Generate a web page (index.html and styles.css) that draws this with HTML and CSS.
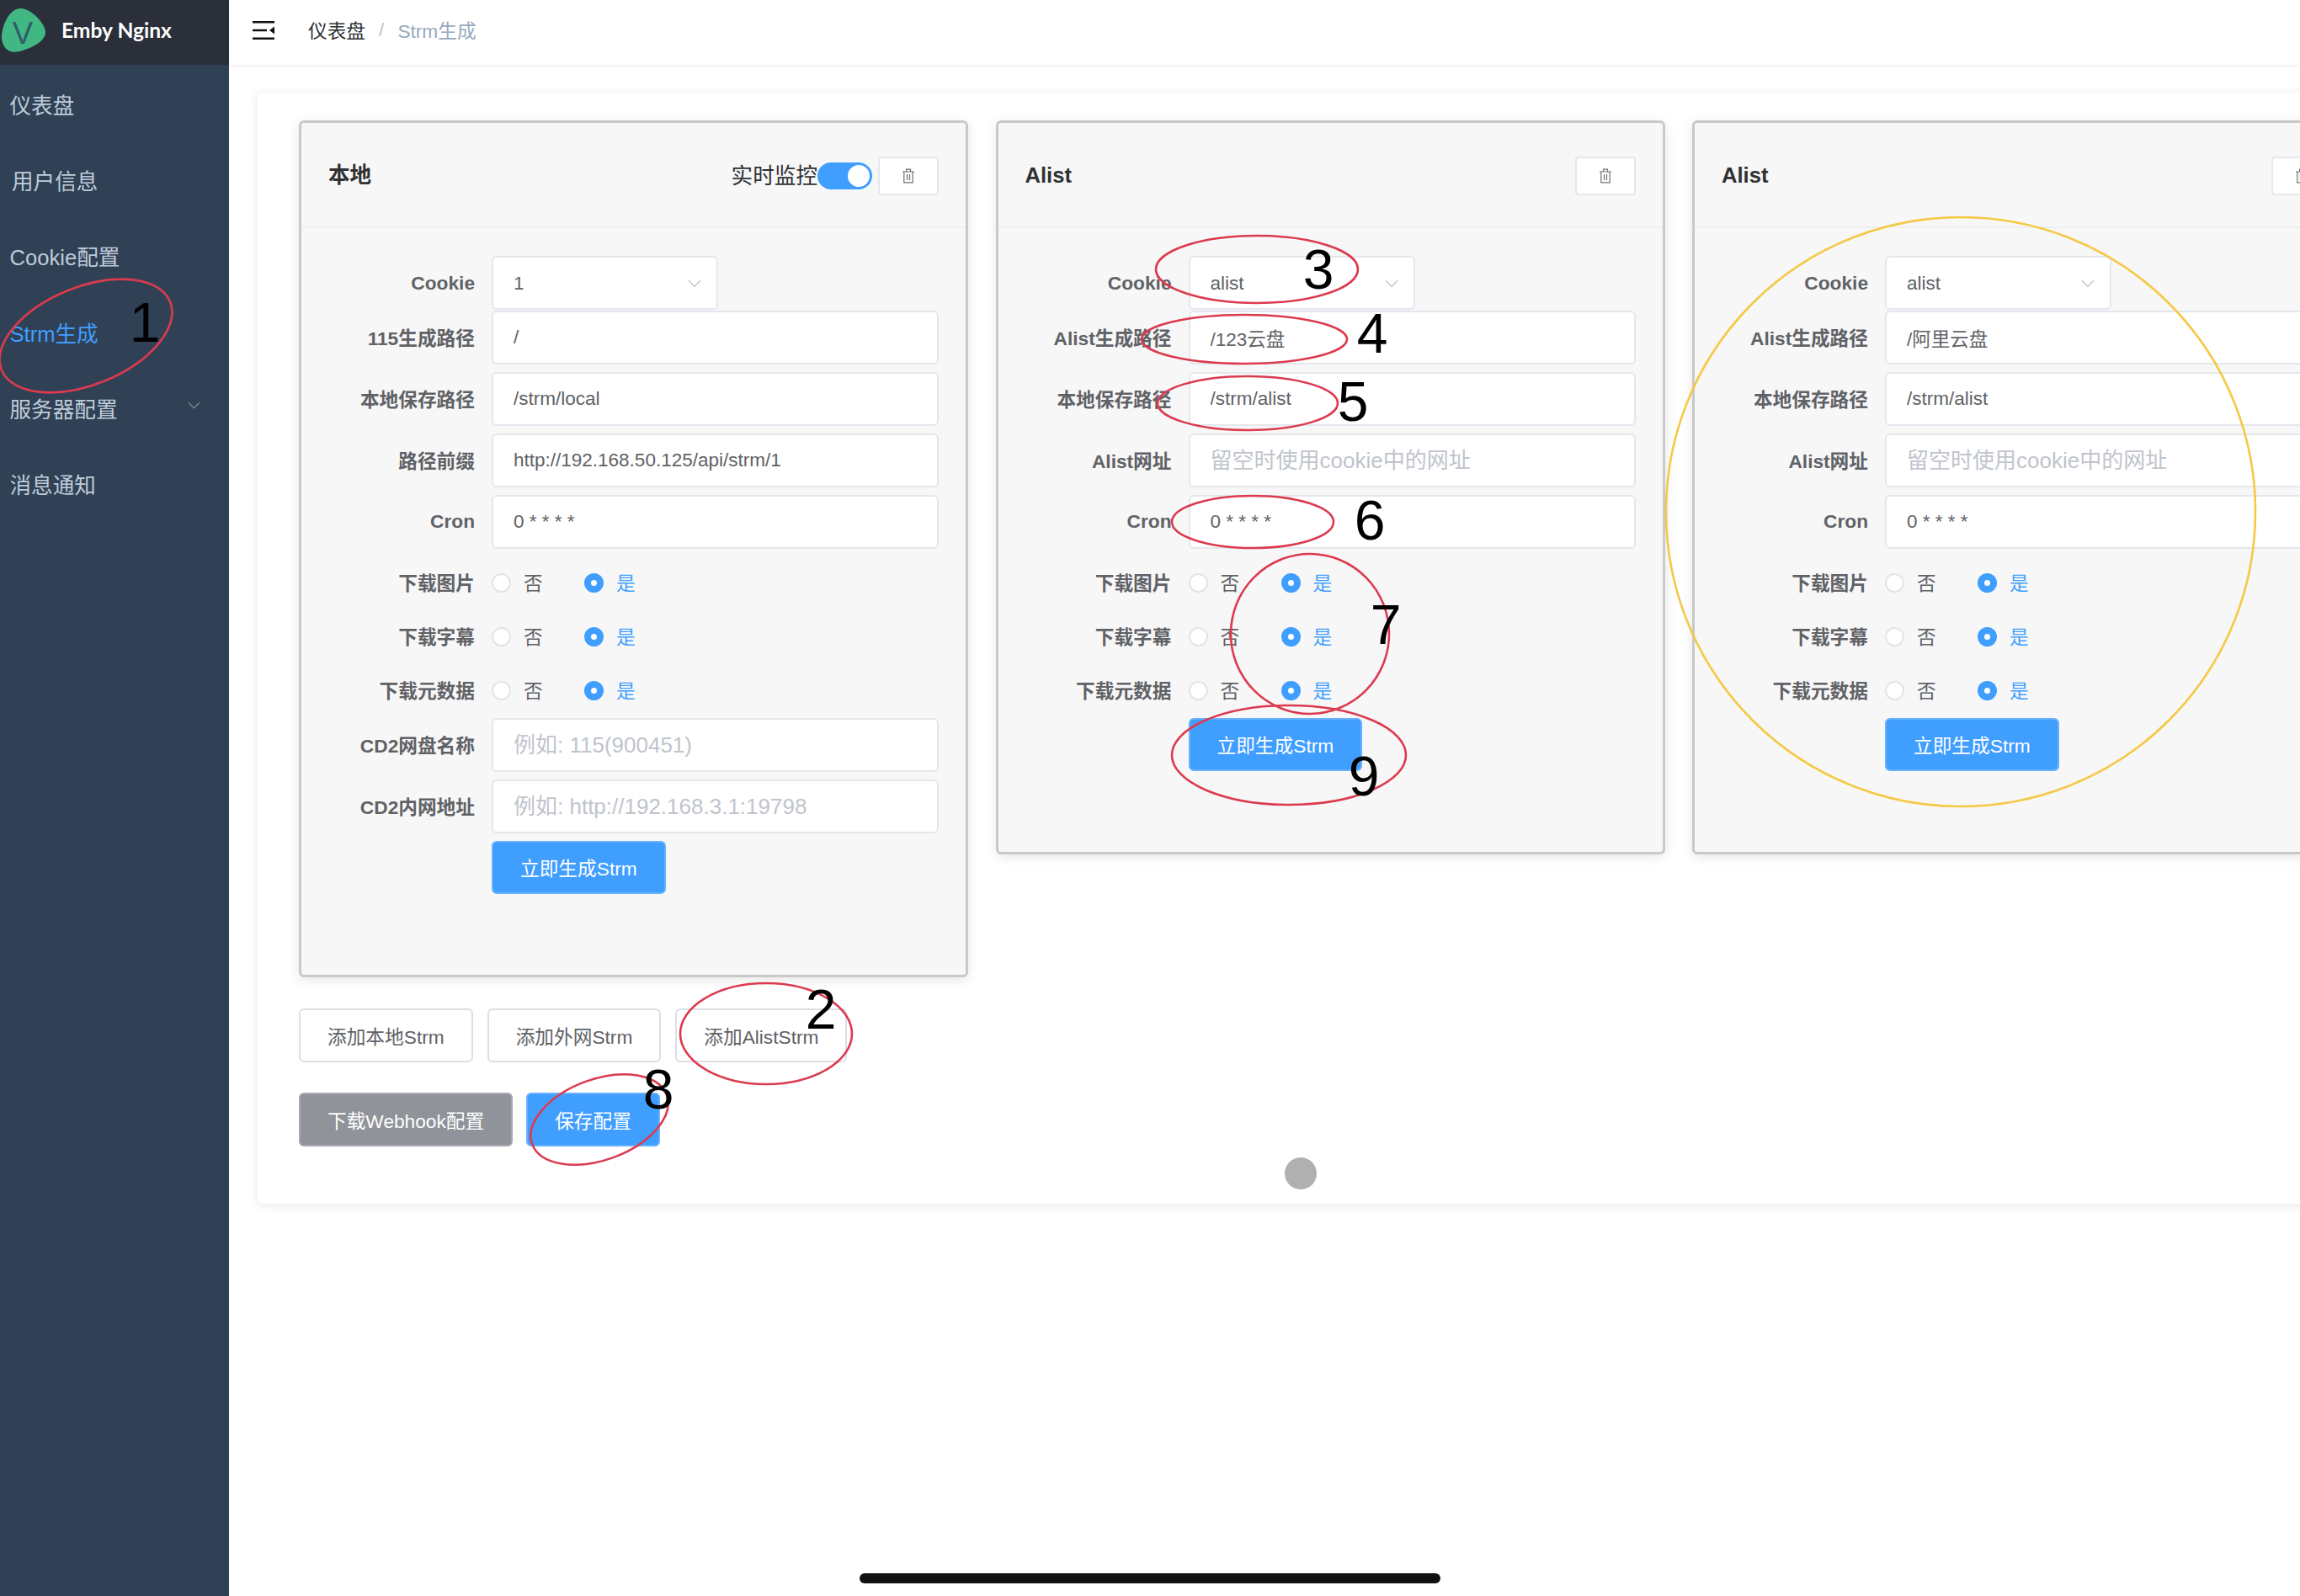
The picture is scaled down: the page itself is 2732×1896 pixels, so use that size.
FILE: index.html
```html
<!DOCTYPE html>
<html>
<head>
  <title>Strm生成</title>
  <link rel="stylesheet" href="styles.css">
</head>
<body>
  <div class="app">
    <aside class="sidebar">
      <div class="brand">
        <svg class="brand-logo" viewBox="0 0 56 56">
          <path d="M25 1 C38 2 54 19 55 30 C55 42 37 50 23 54 C10 57 2 50 1 37 C1 22 11 0 25 1Z" fill="#41b883"/>
          <text x="27" y="45" text-anchor="middle" class="brand-v">V</text>
        </svg>
        <span class="brand-name">Emby Nginx</span>
      </div>
      <nav class="menu">
        <a class="menu-item">仪表盘</a>
        <a class="menu-item menu-item-shift">用户信息</a>
        <a class="menu-item">Cookie配置</a>
        <a class="menu-item active">Strm生成</a>
        <a class="menu-item">服务器配置
          <svg class="menu-arrow" viewBox="0 0 16 10"><path d="M1 1 L8 8 L15 1" fill="none" stroke="#7f8c9c" stroke-width="1.3"/></svg>
        </a>
        <a class="menu-item">消息通知</a>
      </nav>
    </aside>

    <div class="main">
      <header class="topbar">
        <svg class="fold" viewBox="0 0 26 22">
          <path d="M0 1.2 H26 M0 11 H17 M0 20.8 H26" stroke="#111" stroke-width="2.4"/>
          <path d="M26 6.5 V15.5 L20 11Z" fill="#111"/>
        </svg>
        <span class="crumb">仪表盘</span>
        <span class="crumb-sep">/</span>
        <span class="crumb-current">Strm生成</span>
      </header>

      <section class="panel">
        <div class="cards">

          <div class="card card-tall">
            <div class="card-head">
              <span class="card-title">本地</span>
              <div class="card-tools">
                <span class="switch-label">实时监控</span>
                <span class="switch"><i></i></span>
                <button class="del">
                  <svg viewBox="0 0 16 18"><path d="M1 4 H15 M5.5 4 V1.2 H10.5 V4 M2.8 4 V16.8 H13.2 V4 M6.5 7 V14 M9.5 7 V14" fill="none" stroke="#6b6e74" stroke-width="1.2"/></svg>
                </button>
              </div>
            </div>
            <form class="card-body">
              <div class="row row-select"><label>Cookie</label>
                <div class="select"><span>1</span><svg viewBox="0 0 16 10"><path d="M1 1 L8 8.5 L15 1" fill="none" stroke="#c0c4cc" stroke-width="1.3"/></svg></div>
              </div>
              <div class="row"><label>115生成路径</label><input value="/"></div>
              <div class="row"><label>本地保存路径</label><input value="/strm/local"></div>
              <div class="row"><label>路径前缀</label><input value="http://192.168.50.125/api/strm/1"></div>
              <div class="row"><label>Cron</label><input value="0 * * * *"></div>
              <div class="row-radio"><label>下载图片</label><span class="radio"></span><span class="radio-text">否</span><span class="radio on"></span><span class="radio-text on">是</span></div>
              <div class="row-radio"><label>下载字幕</label><span class="radio"></span><span class="radio-text">否</span><span class="radio on"></span><span class="radio-text on">是</span></div>
              <div class="row-radio"><label>下载元数据</label><span class="radio"></span><span class="radio-text">否</span><span class="radio on"></span><span class="radio-text on">是</span></div>
              <div class="row"><label>CD2网盘名称</label><input placeholder="例如: 115(900451)"></div>
              <div class="row"><label>CD2内网地址</label><input placeholder="例如: http://192.168.3.1:19798"></div>
              <div class="row-btn"><button type="button" class="btn btn-primary">立即生成Strm</button></div>
            </form>
          </div>

          <div class="card">
            <div class="card-head">
              <span class="card-title">Alist</span>
              <div class="card-tools">
                <button class="del">
                  <svg viewBox="0 0 16 18"><path d="M1 4 H15 M5.5 4 V1.2 H10.5 V4 M2.8 4 V16.8 H13.2 V4 M6.5 7 V14 M9.5 7 V14" fill="none" stroke="#6b6e74" stroke-width="1.2"/></svg>
                </button>
              </div>
            </div>
            <form class="card-body">
              <div class="row row-select"><label>Cookie</label>
                <div class="select"><span>alist</span><svg viewBox="0 0 16 10"><path d="M1 1 L8 8.5 L15 1" fill="none" stroke="#c0c4cc" stroke-width="1.3"/></svg></div>
              </div>
              <div class="row"><label>Alist生成路径</label><input value="/123云盘"></div>
              <div class="row"><label>本地保存路径</label><input value="/strm/alist"></div>
              <div class="row"><label>Alist网址</label><input placeholder="留空时使用cookie中的网址"></div>
              <div class="row"><label>Cron</label><input value="0 * * * *"></div>
              <div class="row-radio"><label>下载图片</label><span class="radio"></span><span class="radio-text">否</span><span class="radio on"></span><span class="radio-text on">是</span></div>
              <div class="row-radio"><label>下载字幕</label><span class="radio"></span><span class="radio-text">否</span><span class="radio on"></span><span class="radio-text on">是</span></div>
              <div class="row-radio"><label>下载元数据</label><span class="radio"></span><span class="radio-text">否</span><span class="radio on"></span><span class="radio-text on">是</span></div>
              <div class="row-btn"><button type="button" class="btn btn-primary">立即生成Strm</button></div>
            </form>
          </div>

          <div class="card">
            <div class="card-head">
              <span class="card-title">Alist</span>
              <div class="card-tools">
                <button class="del">
                  <svg viewBox="0 0 16 18"><path d="M1 4 H15 M5.5 4 V1.2 H10.5 V4 M2.8 4 V16.8 H13.2 V4 M6.5 7 V14 M9.5 7 V14" fill="none" stroke="#6b6e74" stroke-width="1.2"/></svg>
                </button>
              </div>
            </div>
            <form class="card-body">
              <div class="row row-select"><label>Cookie</label>
                <div class="select"><span>alist</span><svg viewBox="0 0 16 10"><path d="M1 1 L8 8.5 L15 1" fill="none" stroke="#c0c4cc" stroke-width="1.3"/></svg></div>
              </div>
              <div class="row"><label>Alist生成路径</label><input value="/阿里云盘"></div>
              <div class="row"><label>本地保存路径</label><input value="/strm/alist"></div>
              <div class="row"><label>Alist网址</label><input placeholder="留空时使用cookie中的网址"></div>
              <div class="row"><label>Cron</label><input value="0 * * * *"></div>
              <div class="row-radio"><label>下载图片</label><span class="radio"></span><span class="radio-text">否</span><span class="radio on"></span><span class="radio-text on">是</span></div>
              <div class="row-radio"><label>下载字幕</label><span class="radio"></span><span class="radio-text">否</span><span class="radio on"></span><span class="radio-text on">是</span></div>
              <div class="row-radio"><label>下载元数据</label><span class="radio"></span><span class="radio-text">否</span><span class="radio on"></span><span class="radio-text on">是</span></div>
              <div class="row-btn"><button type="button" class="btn btn-primary">立即生成Strm</button></div>
            </form>
          </div>

        </div>

        <div class="actions">
          <button class="btn">添加本地Strm</button>
          <button class="btn">添加外网Strm</button>
          <button class="btn">添加AlistStrm</button>
        </div>
        <div class="actions actions-save">
          <button class="btn btn-grey">下载Webhook配置</button>
          <button class="btn btn-primary">保存配置</button>
        </div>
      </section>
    </div>
  </div>

  <div class="touch-dot"></div>
  <div class="home-bar"></div>

  <!-- hand drawn marks over the screenshot -->
  <svg class="marks" width="2732" height="1896" viewBox="0 0 2732 1896">
    <g class="mark-red">
      <ellipse cx="102" cy="399" rx="108" ry="58" transform="rotate(-22 102 399)"/>
      <ellipse cx="910" cy="1228" rx="102" ry="60"/>
      <ellipse cx="1493" cy="320" rx="120" ry="40"/>
      <ellipse cx="1478" cy="403" rx="122" ry="29"/>
      <ellipse cx="1482" cy="479" rx="107" ry="32"/>
      <ellipse cx="1488" cy="620" rx="96" ry="31"/>
      <ellipse cx="1556" cy="753" rx="94" ry="95"/>
      <ellipse cx="712" cy="1330" rx="85" ry="48" transform="rotate(-20 712 1330)"/>
      <ellipse cx="1531" cy="897" rx="139" ry="59"/>
    </g>
    <circle class="mark-yellow" cx="2329" cy="608" r="350"/>
    <g class="mark-num">
      <text x="172" y="406">1</text>
      <text x="975" y="1222">2</text>
      <text x="1566" y="343">3</text>
      <text x="1630" y="419">4</text>
      <text x="1607" y="500">5</text>
      <text x="1627" y="641">6</text>
      <text x="1646" y="765">7</text>
      <text x="782" y="1317">8</text>
      <text x="1620" y="945">9</text>
    </g>
  </svg>
</body>
</html>
```

FILE: styles.css
```css
html, body {
  height: 100%;
  margin: 0;
  overflow: hidden;
  background: #fff;
  color: #606266;
  font-family: "Liberation Sans", "Noto Sans CJK SC", sans-serif;
  font-size: 22.7px;
}
.app {
  display: flex;
  height: 1896px;
}

/* sidebar */
.sidebar {
  width: 272px;
  flex: none;
  background: #304156;
}
.brand {
  height: 77px;
  box-sizing: border-box;
  display: flex;
  align-items: center;
  gap: 18px;
  padding: 0 0 7px 1px;
  background: #2b2f3a;
}
.brand-logo {
  width: 54px;
  height: 54px;
  margin-top: 2px;
}
.brand-v {
  font-family: "Liberation Sans", sans-serif;
  font-size: 38px;
  fill: #2f5d6b;
}
.brand-name {
  color: #fff;
  font-family: Lato, sans-serif;
  font-weight: 700;
  font-size: 24.6px;
}
.menu {
  padding-top: 1px;
}
.menu-item {
  height: 90.3px;
  display: flex;
  align-items: center;
  position: relative;
  padding-left: 11.5px;
  color: #bfcbd9;
  font-size: 25.6px;
}
.menu-item-shift {
  padding-left: 14px;
}
.menu-item.active {
  color: #409eff;
}
.menu-arrow {
  position: absolute;
  left: 223px;
  top: 38px;
  width: 15px;
  height: 10px;
}

/* top bar */
.main {
  flex: 1;
  min-width: 0;
}
.topbar {
  height: 77px;
  box-sizing: border-box;
  display: flex;
  align-items: center;
  padding: 0 0 6px 28px;
  box-shadow: 0 1px 4px rgba(0, 21, 41, .08);
}
.fold {
  width: 26px;
  height: 22px;
  margin-right: 40px;
}
.crumb {
  color: #303133;
}
.crumb-sep {
  margin: 0 16px;
  color: #c0c4cc;
}
.crumb-current {
  color: #97a8be;
}

/* main panel */
.panel {
  width: 2600px;
  height: 1320px;
  box-sizing: border-box;
  margin: 33px 0 0 34px;
  padding: 33px 49px;
  background: #fff;
  border-radius: 6px;
  box-shadow: 0 2px 12px rgba(0, 0, 0, .1);
}
.cards {
  display: flex;
  align-items: flex-start;
  gap: 32.5px;
}
.card {
  width: 795px;
  flex: none;
  box-sizing: border-box;
  background: #f7f7f8;
  border: 3px solid #c9c9c9;
  border-radius: 6px;
  box-shadow: 0 3px 14px rgba(0, 0, 0, .1);
}
.card-head {
  height: 125px;
  box-sizing: border-box;
  display: flex;
  align-items: center;
  justify-content: space-between;
  padding: 0 32px;
  border-bottom: 2px solid #eeeff1;
}
.card-title {
  color: #303133;
  font-size: 25.6px;
  font-weight: 700;
  line-height: 34px;
}
.card-tools {
  display: flex;
  align-items: center;
  margin-top: 2px;
}
.switch-label {
  color: #303133;
  font-size: 25.6px;
  margin-bottom: 4px;
}
.switch {
  width: 65px;
  height: 32px;
  box-sizing: border-box;
  padding: 3px;
  display: flex;
  justify-content: flex-end;
  background: #409eff;
  border-radius: 16px;
  margin-right: 7px;
}
.switch i {
  width: 26px;
  height: 26px;
  background: #fff;
  border-radius: 50%;
}
.del {
  width: 72px;
  height: 46px;
  display: flex;
  align-items: center;
  justify-content: center;
  padding: 0;
  background: #fff;
  border: 2px solid #e6e7ea;
  border-radius: 4px;
}
.del svg {
  width: 16px;
  height: 18px;
}

/* form rows */
.card-body {
  padding: 33px 32px 96px;
}
.row, .row-radio, .row-btn {
  display: flex;
  align-items: center;
}
.row {
  height: 64px;
  margin-bottom: 9px;
}
.row-select {
  margin-bottom: 1px;
}
.row-radio {
  height: 64px;
}
.row + .row-radio {
  margin-top: -1px;
}
.row-radio + .row, .row-radio + .row-btn {
  margin-top: 1px;
}
.row-btn {
  padding-left: 194px;
}
label {
  width: 174px;
  flex: none;
  margin: 0 20px 2px 0;
  text-align: right;
  font-weight: 700;
}
.row-select label {
  margin-bottom: 0;
}
input, .select {
  box-sizing: border-box;
  height: 64px;
  padding: 0 24px;
  background: #fff;
  color: #606266;
  border: 2px solid #e4e7ed;
  border-radius: 6px;
  font-family: inherit;
  font-size: 22.5px;
}
input {
  flex: 1;
  min-width: 0;
}
input:placeholder-shown {
  padding-top: 3px;
}
input::placeholder {
  color: #c0c4cc;
  font-size: 26px;
}
.select {
  width: 269px;
  display: flex;
  align-items: center;
  justify-content: space-between;
  padding-top: 2px;
  padding-right: 18px;
}
.select svg {
  width: 16px;
  height: 10px;
}
.radio {
  width: 23px;
  height: 23px;
  flex: none;
  box-sizing: border-box;
  background: #fff;
  border: 2px solid #e2e4e9;
  border-radius: 50%;
}
.radio.on {
  border: 8px solid #409eff;
}
.radio-text {
  width: 72px;
  margin: 0 0 2px 15px;
  color: #606266;
}
.radio-text.on {
  color: #409eff;
}

/* buttons */
.btn {
  height: 64px;
  padding: 0 32px;
  background: #fff;
  color: #606266;
  border: 2px solid #dcdfe6;
  border-radius: 6px;
  font: inherit;
}
.row-btn .btn {
  height: 63px;
}
.btn-primary {
  background: #409eff;
  color: #fff;
  border-color: #66b1ff;
}
.btn-grey {
  background: #909399;
  color: #fff;
  border-color: #a6a9ad;
}
.actions {
  display: flex;
  gap: 17px;
  margin-top: 37px;
}
.actions-save {
  gap: 16px;
  margin-top: 36px;
}

/* floating bits */
.touch-dot {
  position: absolute;
  left: 1526px;
  top: 1375px;
  width: 38px;
  height: 38px;
  background: #b0b0b0;
  border-radius: 50%;
}
.home-bar {
  position: absolute;
  left: 1021px;
  top: 1869px;
  width: 690px;
  height: 12px;
  background: #111;
  border-radius: 6px;
}
.marks {
  position: absolute;
  left: 0;
  top: 0;
  pointer-events: none;
}
.mark-red ellipse {
  fill: none;
  stroke: #dc3a4e;
  stroke-width: 2.6;
}
.mark-yellow {
  fill: none;
  stroke: #f5c945;
  stroke-width: 2.6;
}
.mark-num text {
  fill: #000;
  font-family: "Liberation Sans", sans-serif;
  font-size: 66px;
  text-anchor: middle;
}
```
